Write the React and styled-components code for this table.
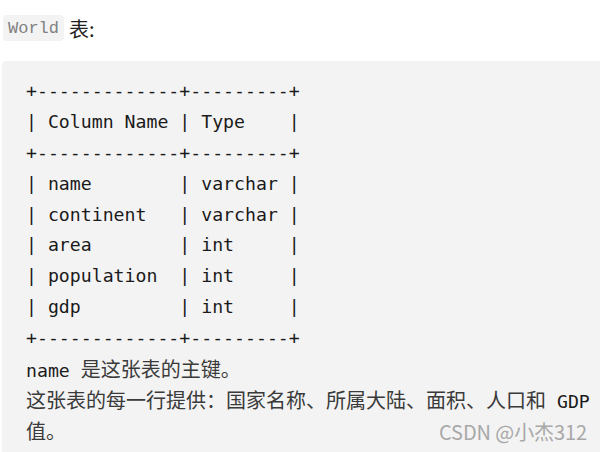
import styled, { createGlobalStyle } from 'styled-components';

const GlobalStyle = createGlobalStyle`
  html, body {
    margin: 0;
    padding: 0;
    background: #ffffff;
  }
`

const rows = [
  '+-------------+---------+',
  '| Column Name | Type    |',
  '+-------------+---------+',
  '| name        | varchar |',
  '| continent   | varchar |',
  '| area        | int     |',
  '| population  | int     |',
  '| gdp         | int     |',
  '+-------------+---------+',
];

function App () {
  return (
    <>
      <GlobalStyle />
      <Page>
        <Intro>
          <InlineCode>World</InlineCode>
          <Zh>表:</Zh>
        </Intro>
        <CodeBlock>
          {rows.map((r, i) => (
            <Line key={i}>{r}</Line>
          ))}
          <Line>name <Zh>是这张表的主键。</Zh></Line>
          <Line><Zh>这张表的每一行提供：国家名称、所属大陆、面积、人口和</Zh> GDP</Line>
          <Line><Zh>值。</Zh></Line>
          <Watermark>CSDN @小杰312</Watermark>
        </CodeBlock>
      </Page>
    </>
  );
};

const Page = styled.div`
  width: 600px;
  height: 452px;
  overflow: hidden;
  padding-left: 2px;
  box-sizing: border-box;
`

const Intro = styled.p`
  display: flex;
  align-items: center;
  margin: 0;
  padding-top: 15px;
  height: 26px;
`

const InlineCode = styled.code`
  display: inline-flex;
  align-items: center;
  height: 26px;
  padding: 0 5px 0 5px;
  margin-left: 1px;
  background: #f3f3f3;
  border-radius: 4px;
  color: #808080;
  font-family: "Liberation Mono", monospace;
  font-size: 17px;
`

const Zh = styled.span`
  margin-left: 4px;
  font-family: "Noto Sans CJK SC", sans-serif;
  font-size: 20px;
  color: #3a3a3a;

  ${Intro} & {
    color: #222;
    margin-left: 5px;
  }
  pre & {
    margin-left: 0;
  }
`

const CodeBlock = styled.pre`
  position: relative;
  margin: 20px 0 0 0;
  padding: 15px 0 16px 24px;
  min-height: 420px;
  background: #f3f3f3;
  border-radius: 4px 0 0 0;
  font-family: "DejaVu Sans Mono", monospace;
  font-size: 18.2px;
  line-height: 30.9px;
  color: #1a1a1a;
`

const Line = styled.div`
  height: 30.9px;
  white-space: pre;
`

const Watermark = styled.span`
  position: absolute;
  left: 437px;
  top: 355px;
  font-family: "Noto Sans CJK SC", sans-serif;
  font-size: 20px;
  line-height: 31px;
  color: #a8a8a8;
  letter-spacing: -0.1px;
`

export default App;
